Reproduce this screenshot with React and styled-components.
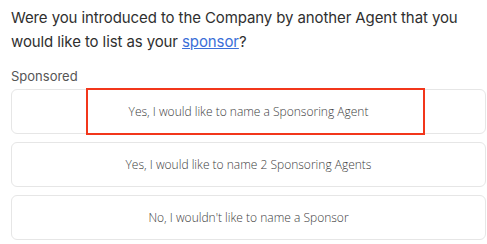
import React from 'react';
import styled, { createGlobalStyle } from 'styled-components';

const GlobalStyle = createGlobalStyle`
  body {
    margin: 0;
    background: #ffffff;
  }
`;

const Page = styled.div`
  width: 487px;
  height: 244px;
  box-sizing: border-box;
  padding: 6px 1px 0 11px;
  font-family: Inter, 'Noto Sans', sans-serif;
  overflow: hidden;
`;

const Question = styled.p`
  margin: 0;
  font-size: 15px;
  line-height: 24px;
  color: #2f2f2f;
  letter-spacing: -0.1px;
`;

const SponsorLink = styled.a`
  color: #3b6fd8;
  text-decoration: underline;
`;

const Label = styled.div`
  margin-top: 14px;
  font-size: 13px;
  line-height: 16px;
  color: #555555;
`;

const Options = styled.div`
  margin-top: 5px;
  display: flex;
  flex-direction: column;
  gap: 8px;
`;

const Option = styled.button`
  position: relative;
  height: 45px;
  width: 100%;
  box-sizing: border-box;
  background: #ffffff;
  border: 1px solid #e6e6e6;
  border-radius: 6px;
  font-family: 'Open Sans', 'Noto Sans', sans-serif;
  font-size: 12px;
  font-weight: 300;
  color: #3c3c3c;
  cursor: pointer;
`;

const Highlight = styled.span`
  position: absolute;
  left: 74px;
  top: -2px;
  width: 339px;
  height: 47px;
  box-sizing: border-box;
  border: 2.5px solid #f2361b;
  pointer-events: none;
`;

const options = [
  { text: 'Yes, I would like to name a Sponsoring Agent', marked: true },
  { text: 'Yes, I would like to name 2 Sponsoring Agents' },
  { text: "No, I wouldn't like to name a Sponsor" },
];

export default function App() {
  return (
    <>
      <GlobalStyle />
      <Page>
        <Question>
          Were you introduced to the Company by another Agent that you would like to list as your{' '}
          <SponsorLink href="#">sponsor</SponsorLink>?
        </Question>
        <Label>Sponsored</Label>
        <Options>
          {options.map((o) => (
            <Option key={o.text}>
              {o.marked && <Highlight />}
              {o.text}
            </Option>
          ))}
        </Options>
      </Page>
    </>
  );
}
